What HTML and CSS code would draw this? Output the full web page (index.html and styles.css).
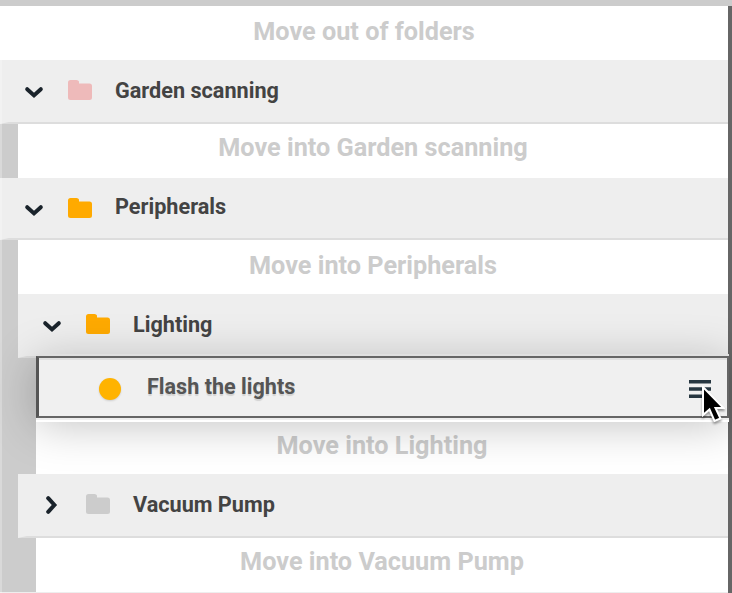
FILE: index.html
```
<!DOCTYPE html>
<html lang="en">
<head>
<meta charset="utf-8">
<title>Sequence folders</title>
<link rel="stylesheet" href="styles.css">
</head>
<body>
<svg class="defs" width="0" height="0">
  <symbol id="folder" viewBox="0 0 24 20"><path d="M2.500 0H8.500Q10.500 0 11 1.500V3.500H21.500Q24 3.500 24 6V17.500Q24 20 21.500 20H2.500Q0 20 0 17.500V2.500Q0 0 2.500 0Z"/></symbol>
  <symbol id="chevron" viewBox="0 0 20 14"><path d="M3.200 4.200L10 10.400L16.800 4.200" fill="none" stroke="#1a232b" stroke-width="4" stroke-linecap="round"/></symbol>
</svg>
<main class="list">
  <div class="drop top">Move out of folders</div>
  <div class="row tall">
    <svg class="chevron"><use href="#chevron"/></svg>
    <svg class="folder pink"><use href="#folder"/></svg>
    <span class="name">Garden scanning</span>
  </div>
  <div class="nest"><div class="drop high">Move into Garden scanning</div></div>
  <div class="row peripherals">
    <svg class="chevron"><use href="#chevron"/></svg>
    <svg class="folder orange"><use href="#folder"/></svg>
    <span class="name">Peripherals</span>
  </div>
  <div class="nest">
    <div class="drop top">Move into Peripherals</div>
    <div class="row tall">
      <svg class="chevron"><use href="#chevron"/></svg>
      <svg class="folder orange"><use href="#folder"/></svg>
      <span class="name">Lighting</span>
    </div>
    <div class="nest dragging">
      <div class="item">
        <span class="dot"></span>
        <span class="item-name">Flash the lights</span>
        <svg class="handle" viewBox="0 0 22 18"><path d="M0 1.700H22M0 9H22M0 16.200H22"/></svg>
      </div>
      <div class="drop after">Move into Lighting</div>
    </div>
    <div class="row tall above">
      <svg class="chevron closed"><use href="#chevron"/></svg>
      <svg class="folder gray"><use href="#folder"/></svg>
      <span class="name">Vacuum Pump</span>
    </div>
    <div class="nest"><div class="drop high">Move into Vacuum Pump</div></div>
  </div>
  <div class="end"></div>
</main>
<svg class="cursor" viewBox="0 0 24 38"><path d="M2 1V29L8.500 23.500L13.500 35L19.500 32.500L14.500 22H22.500Z"/></svg>
</body>
</html>
```
FILE: styles.css
```
* { box-sizing: border-box; }
body {
  margin: 0;
  width: 732px;
  height: 593px;
  overflow: hidden;
  position: relative;
  border-top: 6px solid #ccc;
  background: #666;
  font-family: Roboto, sans-serif;
  font-weight: 700;
}
body::before {
  content: "";
  position: absolute;
  z-index: 3;
  left: 0;
  top: 0;
  width: 2px;
  height: 587px;
  background: rgba(255, 255, 255, .25);
}
.defs { position: absolute; }
.list { width: 728px; height: 587px; background: #ccc; }
.drop {
  height: 54px;
  background: #fff;
  color: #ccc;
  font-size: 25.250px;
  line-height: 50px;
  text-align: center;
  white-space: nowrap;
}
.drop.top { line-height: 52px; }
.drop.high { line-height: 48px; }
.nest { padding-left: 18px; }
.row {
  height: 62px;
  display: flex;
  align-items: center;
  padding-left: 15px;
  background: #eee;
  border-left: 9px solid #eee;
  border-bottom: 2px solid #ddd;
}
.tall { height: 64px; }
.chevron { width: 20px; height: 14px; margin-top: 2px; }
.peripherals .chevron { margin-top: 4px; }
.closed { transform: rotate(-90deg); position: relative; left: -1px; top: -1px; }
.folder { width: 24px; height: 20px; margin-left: 24px; margin-top: -2px; }
.peripherals .folder { margin-top: 0; }
.pink { fill: #eebaba; }
.orange { fill: #ffaa00; }
.gray { fill: #ccc; }
.name { margin-left: 23px; color: #434343; font-size: 21.650px; line-height: 26px; }
.peripherals .name { margin-top: -2px; }
.dragging { position: relative; }
.item {
  position: relative;
  height: 62px;
  margin: -2px -1px 0 0;
  display: flex;
  align-items: center;
  padding-left: 60px;
  padding-right: 16px;
  background: #f0f0f0;
  border: 2px solid #666;
  border-left: 3px solid #555;
  box-shadow: inset 0 2px 0 #e0e0e0, 0 -2px 0 #e0e0e0, 0 2px 0 #eee, 0 4px 0 #fff, 0 6px 46px rgba(0, 0, 0, .25);
}
.dot { width: 22px; height: 22px; border-radius: 50%; background: #ffb300; margin-top: 4px; box-shadow: 0 1px 2px rgba(0, 0, 0, .15); }
.item-name { margin-left: 26px; margin-top: -2px; color: #555; font-size: 21.600px; text-shadow: 0 2px 1px rgba(0, 0, 0, .12); }
.handle { width: 22px; height: 18px; margin-left: auto; margin-top: 3px; stroke: #263640; stroke-width: 3.500; }
.after { height: 56px; padding-top: 3px; }
.above { position: relative; }
.end { height: 1px; background: #eee; }
.cursor {
  position: absolute;
  z-index: 2;
  left: 701px;
  top: 380px;
  width: 24px;
  height: 38px;
  fill: #000;
  stroke: #fff;
  stroke-width: 2;
  filter: drop-shadow(0 2px 1px rgba(0, 0, 0, .4));
}
```
